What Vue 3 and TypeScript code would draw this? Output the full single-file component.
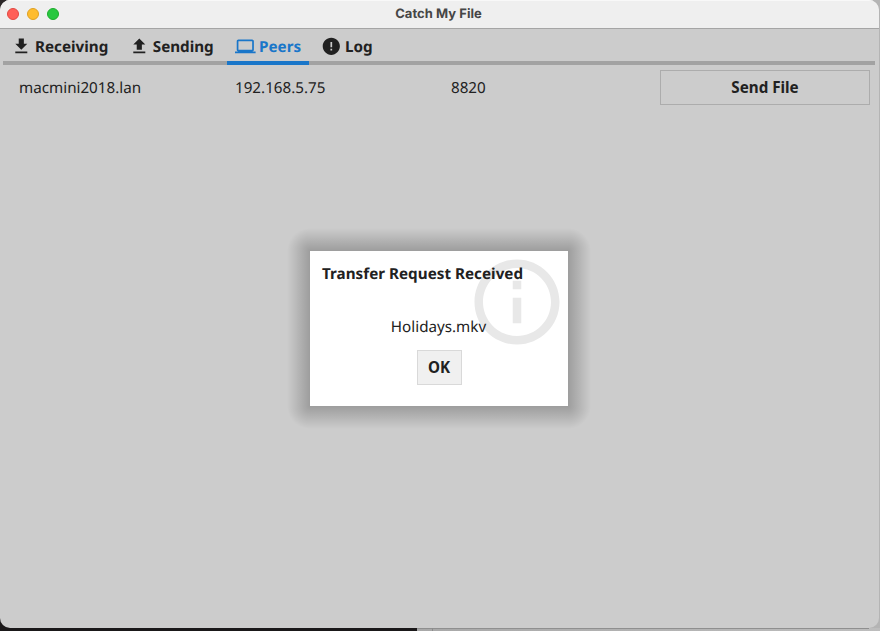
<script setup lang="ts">
interface Tab { id: string; label: string; icon: string }
interface Peer { host: string; address: string; port: number }

const tabs: Tab[] = [
  { id: 'receiving', label: 'Receiving', icon: 'M19 9h-4V3H9v6H5l7 7 7-7zM5 18v2h14v-2H5z' },
  { id: 'sending', label: 'Sending', icon: 'M9 16h6v-6h4l-7-7-7 7h4zm-4 2h14v2H5z' },
  { id: 'peers', label: 'Peers', icon: 'M20 18c1.1 0 1.99-.9 1.99-2L22 6c0-1.1-.9-2-2-2H4c-1.1 0-2 .9-2 2v10c0 1.1.9 2 2 2H0v2h24v-2h-4zM4 6h16v10H4V6z' },
  { id: 'log', label: 'Log', icon: 'M12 2C6.48 2 2 6.48 2 12s4.48 10 10 10 10-4.48 10-10S17.52 2 12 2zm1 15h-2v-2h2v2zm0-4h-2V7h2v6z' },
]
const active = 'peers'
const peers: Peer[] = [{ host: 'macmini2018.lan', address: '192.168.5.75', port: 8820 }]
const shadowParts = ['nw', 'n', 'ne', 'w', 'mid', 'e', 'sw', 's', 'se']
</script>

<template>
  <div class="desktop">
    <div class="window">
      <header class="titlebar">
        <div class="lights"><i class="close"></i><i class="minimize"></i><i class="zoom"></i></div>
        <span class="title">Catch My File</span>
      </header>
      <nav class="tabs">
        <div v-for="tab in tabs" :key="tab.id" class="tab" :class="[tab.id, { active: tab.id === active }]">
          <svg class="icon" viewBox="0 0 24 24"><path :d="tab.icon" fill="currentColor" /></svg>
          <span>{{ tab.label }}</span>
        </div>
      </nav>
      <main class="peers-list">
        <div v-for="peer in peers" :key="peer.host" class="row">
          <span class="cell">{{ peer.host }}</span>
          <span class="cell">{{ peer.address }}</span>
          <span class="cell">{{ peer.port }}</span>
          <button class="send">Send File</button>
        </div>
      </main>
      <div class="overlay">
        <div class="shadow"><div v-for="part in shadowParts" :key="part" :class="part"></div></div>
        <section class="dialog">
          <svg class="info" viewBox="0 0 24 24">
            <path fill="#e8e8e8" d="M11 7h2v2h-2zm0 4h2v6h-2zm1-9C6.48 2 2 6.48 2 12s4.48 10 10 10 10-4.48 10-10S17.52 2 12 2zm0 18c-4.41 0-8-3.59-8-8s3.59-8 8-8 8 3.59 8 8-3.59 8-8 8z" />
          </svg>
          <h2>Transfer Request Received</h2>
          <p>Holidays.mkv</p>
          <button class="ok">OK</button>
        </section>
      </div>
    </div>
  </div>
</template>

<style>
body { margin: 0; overflow: hidden; }
</style>

<style scoped>
* { box-sizing: border-box; }
.desktop {
  width: 880px; height: 631px;
  background:
    linear-gradient(#1a1819, #1a1819) 0 100% / 417px 20px no-repeat,
    linear-gradient(#8c8c8c, #8c8c8c) 432px 100% / 1px 3px no-repeat,
    linear-gradient(#8f8f8f, #8f8f8f) 417px 628px / 452px 1px no-repeat,
    linear-gradient(90deg, #a8a8a8, #bdbdbd) 417px 100% / 463px 3px no-repeat,
    linear-gradient(#2b2829, #2b2829) 0 0 / 20px 20px no-repeat,
    #b4b4b4;
}
.window {
  position: relative; width: 879px; height: 628px; overflow: hidden;
  display: flex; flex-direction: column;
  background: #ccc; border-radius: 10px; color: #212121;
  font-family: "Noto Sans", sans-serif; font-size: 15.2px; line-height: 20px;
  text-rendering: geometricPrecision;
}
.titlebar {
  height: 29px; flex: none; display: grid; grid-template-columns: 1fr auto 1fr;
  align-items: center; padding-bottom: 1px;
  background: #efefef; border-top: 1px solid #f8f8f8; border-bottom: 1px solid #a5a5a5;
}
.lights { display: flex; gap: 8px; padding-left: 7px; }
.lights i { width: 12px; height: 12px; border-radius: 50%; border: 1px solid; }
.lights .close { background: #ff5f57; border-color: #e14942; }
.lights .minimize { background: #febc2e; border-color: #dfa023; }
.lights .zoom { background: #28c840; border-color: #1dac2c; }
.title { font: 700 13px/16px Inter, sans-serif; color: #464646; letter-spacing: 0.04px; margin: 0 2px 1px 0; }
.tabs {
  height: 36px; flex: none; margin: 0 4px 0 3px; display: flex; gap: 4px;
  background: linear-gradient(#a2a2a2, #a2a2a2) 0 100% / 100% 4px no-repeat;
}
.tab { display: flex; align-items: center; gap: 3.5px; padding: 0 0 1px 8px; font-weight: 700; white-space: nowrap; }
.icon { width: 20.6px; height: 20.6px; flex: none; }
.receiving { width: 113.7px; }
.sending { width: 102.3px; }
.peers { width: 82px; }
.log { width: 68px; }
.active { color: #1976c9; background: linear-gradient(#1976c9, #1976c9) 0 100% / 100% 4px no-repeat; }
.peers-list { padding: 4px 8px 0 7px; flex: 1; }
.row { display: grid; grid-template-columns: repeat(3, 216px) 216px; height: 37px; align-items: center; }
.cell { padding-left: 12px; }
button { font: inherit; font-weight: 700; color: inherit; padding: 0 0 2px; }
.send { height: 35px; border: 1px solid #acacac; background: #ccc; margin-left: 5px; width: 210px; }
.overlay {
  position: absolute; left: 287px; top: 228px; width: 304px; height: 201px;
  display: grid; padding: 23px;
}
.shadow {
  position: absolute; inset: 0; display: grid;
  grid-template-columns: 23px 1fr 23px; grid-template-rows: 23px 1fr 23px;
}
.shadow div { --ink: rgba(0, 0, 0, .23); }
.n { background: linear-gradient(to top, var(--ink), transparent); }
.s { background: linear-gradient(to bottom, var(--ink), transparent); }
.w { background: linear-gradient(to left, var(--ink), transparent); }
.e { background: linear-gradient(to right, var(--ink), transparent); }
.nw { background: radial-gradient(circle at 100% 100%, var(--ink), transparent 23px); }
.ne { background: radial-gradient(circle at 0 100%, var(--ink), transparent 23px); }
.sw { background: radial-gradient(circle at 100% 0, var(--ink), transparent 23px); }
.se { background: radial-gradient(circle at 0 0, var(--ink), transparent 23px); }
.dialog {
  position: relative; background: #fff; display: flex; flex-direction: column;
  align-items: center; padding: 13px 12px 12px;
}
.info { position: absolute; right: 0; top: 0; width: 102px; height: 102px; }
h2, p { position: relative; margin: 0; font-size: 15.2px; }
h2 { align-self: flex-start; white-space: nowrap; letter-spacing: 0.03px; }
p { margin: 33px 1px 13px 0; }
.ok { width: 45px; height: 35px; flex: none; border: 1px solid #d9d9d9; background: #f0f0f0; margin-left: 1px; padding-right: 1px; }
</style>
